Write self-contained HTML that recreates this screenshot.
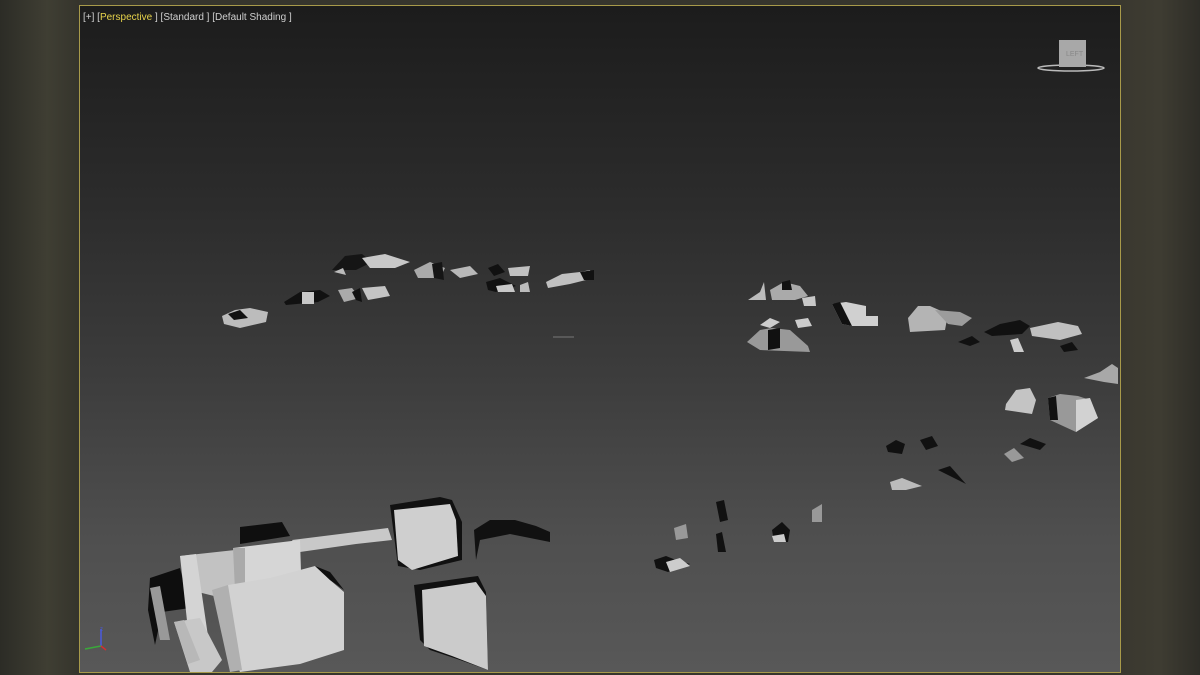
<!DOCTYPE html>
<html><head><meta charset="utf-8"><style>
html,body{margin:0;padding:0;width:1200px;height:675px;overflow:hidden;background:#36352d;}
.side{position:absolute;top:0;height:675px;}
#vp{position:absolute;left:79px;top:5px;width:1040px;height:666px;border:1px solid #a89a4a;
background:linear-gradient(#1c1c1c 0%,#2c2c2c 30%,#3c3c3c 55%,#4f4f4f 80%,#585858 100%);overflow:hidden;}
#lbl{position:absolute;left:3px;top:6px;font:10px "Liberation Sans",sans-serif;color:#cfcfcf;white-space:pre;}
#lbl span{color:#e6d24a;}
svg{position:absolute;left:0;top:0;}
</style></head><body>
<div class="side" style="left:0;width:79px;background:linear-gradient(90deg,#2c2c26,#3f3e33 60%,#35342c)"></div>
<div class="side" style="left:1120px;width:80px;background:linear-gradient(90deg,#3a382f,#3e3c32 50%,#2e2d27)"></div>
<div id="vp">
<div id="lbl">[+] [<span>Perspective</span> ] [Standard ] [Default Shading ]</div>
</div>
<svg width="1200" height="675" viewBox="0 0 1200 675">
<!-- viewcube -->
<ellipse cx="1071" cy="68" rx="33" ry="3" fill="none" stroke="#bbb" stroke-width="1.5"/>
<rect x="1059" y="40" width="27" height="27" fill="#a8a8a8"/>
<text x="1066" y="56" font-family="Liberation Sans,sans-serif" font-size="7" fill="#888">LEFT</text>
<!-- far cluster left -->
<g>
<polygon points="222,316 235,310 250,308 268,312 266,322 240,328 224,324" fill="#bcbcbc"/>
<polygon points="228,314 240,310 248,318 234,320" fill="#111"/>
<polygon points="284,302 300,292 320,290 330,296 318,302 286,305" fill="#111"/>
<rect x="302" y="292" width="12" height="12" fill="#c8c8c8"/>
<polygon points="338,290 352,288 360,298 344,302" fill="#aaa"/>
<polygon points="362,288 385,286 390,296 368,300" fill="#c4c4c4"/>
<polygon points="352,292 360,288 362,302 356,300" fill="#111"/>
<polygon points="332,270 345,256 362,254 372,262 356,270" fill="#151515"/>
<polygon points="362,258 385,254 410,262 395,268 370,268" fill="#c8c8c8"/>
<polygon points="334,272 343,268 346,275" fill="#bbb"/>
<polygon points="414,270 430,262 445,268 440,278 418,278" fill="#aaa"/>
<polygon points="432,264 442,262 444,280 434,278" fill="#151515"/>
<polygon points="450,270 470,266 478,274 460,278" fill="#b8b8b8"/>
<polygon points="488,268 498,264 505,272 494,276" fill="#111"/>
<polygon points="508,268 530,266 528,276 510,276" fill="#c0c0c0"/>
<polygon points="486,282 500,278 516,286 496,292 488,290" fill="#111"/>
<polygon points="496,286 512,284 515,292 498,292" fill="#c8c8c8"/>
<polygon points="520,285 528,282 530,292 520,292" fill="#bbb"/>
<polygon points="546,282 562,274 580,272 590,270 594,278 570,284 548,288" fill="#c0c0c0"/>
<polygon points="580,272 594,270 594,280 584,280" fill="#111"/>
<line x1="553" y1="337" x2="574" y2="337" stroke="#777" stroke-width="1"/>
</g>
<!-- right clusters -->
<g>
<polygon points="748,300 760,292 764,282 766,300" fill="#bbb"/>
<polygon points="770,290 784,282 800,286 808,296 795,300 772,300" fill="#aaa"/>
<polygon points="782,282 790,280 792,290 782,290" fill="#111"/>
<polygon points="802,298 815,296 816,306 804,306" fill="#c8c8c8"/>
<polygon points="760,325 770,318 780,322 770,328" fill="#ccc"/>
<polygon points="747,342 760,330 772,328 790,330 808,346 810,352 760,350" fill="#999"/>
<polygon points="768,330 780,328 780,348 768,350" fill="#111"/>
<polygon points="795,320 808,318 812,326 798,328" fill="#ccc"/>
<polygon points="832,304 846,302 866,306 866,316 878,316 878,326 852,326 842,324" fill="#d0d0d0"/>
<polygon points="832,304 840,302 852,326 842,324" fill="#111"/>
<polygon points="908,318 918,306 930,306 948,314 945,330 910,332" fill="#b4b4b4"/>
<polygon points="935,310 960,312 972,318 962,326 948,324" fill="#9c9c9c"/>
<polygon points="958,342 972,336 980,342 970,346" fill="#111"/>
<polygon points="984,332 1000,324 1020,320 1030,326 1022,334 992,336" fill="#111"/>
<polygon points="1030,328 1058,322 1078,326 1082,334 1060,340 1032,336" fill="#c0c0c0"/>
<polygon points="1010,340 1018,338 1024,352 1014,352" fill="#ccc"/>
<polygon points="1060,346 1072,342 1078,350 1064,352" fill="#111"/>
<polygon points="1084,378 1100,372 1112,364 1118,368 1118,384 1104,382" fill="#a8a8a8"/>
<polygon points="1006,404 1016,390 1030,388 1036,400 1032,414 1005,410" fill="#c4c4c4"/>
<polygon points="1048,398 1060,394 1078,396 1090,400 1098,418 1076,432 1050,420" fill="#999"/>
<polygon points="1048,398 1056,396 1058,420 1050,420" fill="#111"/>
<polygon points="1076,400 1090,398 1098,418 1076,432" fill="#d2d2d2"/>
<polygon points="886,446 896,440 905,444 902,454 888,452" fill="#111"/>
<polygon points="920,440 932,436 938,446 926,450" fill="#111"/>
<polygon points="1020,444 1030,438 1046,444 1040,450" fill="#111"/>
<polygon points="1004,454 1014,448 1024,458 1012,462" fill="#999"/>
<polygon points="938,470 950,466 966,484" fill="#111"/>
<polygon points="890,482 902,478 922,486 906,490 892,490" fill="#bbb"/>
<polygon points="716,502 724,500 728,520 720,522" fill="#111"/>
<polygon points="716,534 722,532 726,552 718,552" fill="#111"/>
<polygon points="674,528 686,524 688,538 676,540" fill="#999"/>
<polygon points="772,530 782,522 790,530 788,542 774,542" fill="#111"/>
<polygon points="772,536 784,534 786,542 774,542" fill="#ccc"/>
<polygon points="812,510 822,504 822,522 812,522" fill="#999"/>
<polygon points="654,560 666,556 676,560 690,564 668,572 656,568" fill="#111"/>
<polygon points="666,562 680,558 690,566 670,572" fill="#ccc"/>
</g>
<!-- foreground buildings -->
<g>
<polygon points="474,530 490,520 515,520 536,526 550,532 550,542 510,534 480,540 476,560" fill="#111"/>
<polygon points="292,540 340,534 388,528 392,540 356,544 300,552" fill="#c8c8c8"/>
<polygon points="390,505 440,497 452,500 462,522 462,560 420,570 398,566" fill="#111"/>
<polygon points="394,510 450,504 456,520 458,556 412,570 398,560" fill="#cfcfcf"/>
<polygon points="414,585 470,577 478,576 486,592 488,670 460,660 430,650 420,640" fill="#111"/>
<polygon points="422,590 476,582 486,596 488,670 452,656 424,646" fill="#cbcbcb"/>
<polygon points="150,578 180,568 190,608 162,612 155,645 148,610" fill="#0e0e0e"/>
<polygon points="150,588 160,586 170,640 160,640" fill="#999"/>
<polygon points="240,527 282,522 290,536 240,544" fill="#0f0f0f"/>
<polygon points="180,556 235,550 300,548 300,570 230,600 190,590" fill="#c2c2c2"/>
<polygon points="180,556 196,554 210,650 196,660 188,630" fill="#d4d4d4"/>
<polygon points="233,548 300,540 302,604 242,612" fill="#d6d6d6"/>
<polygon points="233,548 245,548 245,612 236,612" fill="#aaa"/>
<polygon points="228,585 270,578 315,566 330,580 344,592 344,650 300,664 240,672 226,640" fill="#d2d2d2"/>
<polygon points="315,566 330,572 344,590 330,580" fill="#0f0f0f"/>
<polygon points="212,590 228,585 242,670 230,672" fill="#b0b0b0"/>
<polygon points="174,622 200,618 222,660 212,672 190,672" fill="#c8c8c8"/>
<polygon points="174,622 184,620 200,660 188,664" fill="#b8b8b8"/>
</g>
<!-- axis tripod -->
<line x1="101" y1="646" x2="101" y2="629" stroke="#4a5ae0" stroke-width="1.5"/>
<line x1="101" y1="646" x2="85" y2="649" stroke="#3aa83a" stroke-width="1.5"/>
<line x1="101" y1="646" x2="106" y2="650" stroke="#d03030" stroke-width="1.5"/>
<text x="100" y="631" font-family="Liberation Sans,sans-serif" font-size="6" fill="#4a5ae0">z</text>
</svg>
</body></html>
